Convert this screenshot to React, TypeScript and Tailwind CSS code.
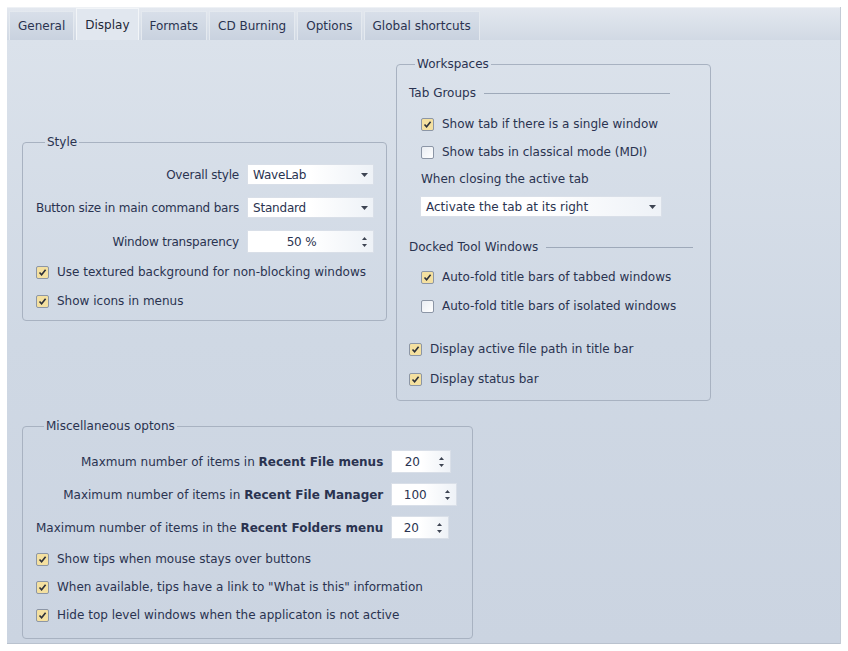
import React from 'react';

const tabs = ['General', 'Display', 'Formats', 'CD Burning', 'Options', 'Global shortcuts'];

function Check({ checked, label }: { checked: boolean; label: React.ReactNode }) {
  return (
    <div className="flex items-center gap-[8px] h-[18px]">
      <span
        className={`w-[13px] h-[13px] border border-[#8c96a6] rounded-[2px] flex items-center justify-center shrink-0 ${
          checked ? 'bg-[#f4e0a0]' : 'bg-gradient-to-br from-[#e9edf3] to-[#ffffff]'
        }`}
      >
        {checked && (
          <svg width="9" height="9" viewBox="0 0 9 9">
            <path d="M1.5 4.5 L3.6 6.8 L7.6 1.8" fill="none" stroke="#2b2f3a" strokeWidth="1.6" />
          </svg>
        )}
      </span>
      <span className="whitespace-nowrap">{label}</span>
    </div>
  );
}

function Select({ value, width }: { value: string; width: number }) {
  return (
    <div
      className="h-[21px] flex items-center bg-gradient-to-r from-white via-white to-[#eef2f7] border border-[#d9dfe8]"
      style={{ width }}
    >
      <span className="flex-1 pl-[5px] whitespace-nowrap">{value}</span>
      <span className="w-[18px] flex justify-center">
        <svg width="7" height="4" viewBox="0 0 7 4">
          <path d="M0 0 H7 L3.5 4 Z" fill="#3d4452" />
        </svg>
      </span>
    </div>
  );
}

function Spin({ value, width }: { value: string; width: number }) {
  return (
    <div
      className="h-[23px] flex items-center bg-gradient-to-r from-white via-white to-[#eef2f7] border border-[#d9dfe8]"
      style={{ width }}
    >
      <span className="flex-1 whitespace-nowrap text-center">{value}</span>
      <span className="w-[18px] flex flex-col items-center gap-[4px]">
        <svg width="5" height="3" viewBox="0 0 5 3">
          <path d="M0 3 H5 L2.5 0 Z" fill="#3d4452" />
        </svg>
        <svg width="5" height="3" viewBox="0 0 5 3">
          <path d="M0 0 H5 L2.5 3 Z" fill="#3d4452" />
        </svg>
      </span>
    </div>
  );
}

function SubHeading({ label, lineWidth }: { label: string; lineWidth: number }) {
  return (
    <div className="flex items-center gap-[8px]">
      <span className="whitespace-nowrap">{label}</span>
      <span className="h-0 border-t border-[#9ea9b9]" style={{ width: lineWidth }} />
    </div>
  );
}

export default function App() {
  return (
    <div
      className="w-[848px] h-[651px] bg-white pt-[7px] pl-[7px] text-[12px] text-[#2a3350]"
      style={{ fontFamily: '"DejaVu Sans", "Liberation Sans", sans-serif' }}
    >
      <div className="w-[834px] h-[637px] flex flex-col border-r border-[#c3cbd6]">
        {/* tab strip */}
        <div className="h-[33px] bg-gradient-to-b from-[#e3e8ef] to-[#d1d9e4] flex items-end pl-[2px] gap-[2px] border-t border-[#eef1f5]">
          {tabs.map((t) => {
            const active = t === 'Display';
            return (
              <div
                key={t}
                className={`px-[8px] flex items-center whitespace-nowrap border border-b-0 ${
                  active
                    ? 'h-[32px] bg-[#e1e7ef] border-[#f2f5f8] text-[#1f2838]'
                    : 'h-[29px] bg-gradient-to-b from-[#d8dfe9] to-[#c9d2df] border-[#e4e9ef] text-[#2a3350]'
                }`}
              >
                {t}
              </div>
            );
          })}
        </div>

        {/* page */}
        <div className="flex-1 bg-gradient-to-b from-[#dbe2eb] via-[#cfd8e4] to-[#cbd4e1] border-b border-[#b9c2ce] pl-[15px]">
          <div className="flex items-start">
            {/* Style group */}
            <fieldset className="mt-[93px] w-[365px] min-w-0 h-[188px] border border-[#a8b2c1] rounded-[4px] pl-[13px] pr-[12px]">
              <legend className="px-[2px] ml-[9px]">Style</legend>
              <div className="grid grid-cols-[auto_auto] gap-x-[8px] gap-y-[12px] items-center justify-end mt-[13px] tracking-[-0.2px]">
                <span className="text-right whitespace-nowrap">Overall style</span>
                <Select value="WaveLab" width={127} />
                <span className="text-right whitespace-nowrap">Button size in main command bars</span>
                <Select value="Standard" width={127} />
                <span className="text-right whitespace-nowrap">Window transparency</span>
                <Spin value="50 %" width={127} />
              </div>
              <div className="flex flex-col gap-[11px] mt-[10px]">
                <Check checked label="Use textured background for non-blocking windows" />
                <Check checked label="Show icons in menus" />
              </div>
            </fieldset>

            {/* Workspaces group */}
            <fieldset className="ml-[9px] mt-[15px] w-[315px] min-w-0 h-[346px] border border-[#a8b2c1] rounded-[4px] pl-[12px]">
              <legend className="px-[2px] ml-[6px]">Workspaces</legend>
              <div className="mt-[11px]">
                <SubHeading label="Tab Groups" lineWidth={186} />
              </div>
              <div className="pl-[12px] flex flex-col gap-[10px] mt-[13px]">
                <Check checked label="Show tab if there is a single window" />
                <Check checked={false} label="Show tabs in classical mode (MDI)" />
              </div>
              <div className="pl-[12px] mt-[9px]">When closing the active tab</div>
              <div className="pl-[11px] mt-[8px]">
                <Select value="Activate the tab at its right" width={242} />
              </div>
              <div className="mt-[21px]">
                <SubHeading label="Docked Tool Windows" lineWidth={147} />
              </div>
              <div className="pl-[12px] flex flex-col gap-[11px] mt-[12px]">
                <Check checked label="Auto-fold title bars of tabbed windows" />
                <Check checked={false} label="Auto-fold title bars of isolated windows" />
              </div>
              <div className="flex flex-col gap-[12px] mt-[25px]">
                <Check checked label="Display active file path in title bar" />
                <Check checked label="Display status bar" />
              </div>
            </fieldset>
          </div>

          {/* Miscellaneous group */}
          <fieldset className="mt-[16px] w-[451px] min-w-0 h-[222px] border border-[#a8b2c1] rounded-[4px] pl-[13px]">
            <legend className="px-[2px] ml-[8px]">Miscellaneous optons</legend>
            <div className="grid grid-cols-[auto_auto] w-fit gap-x-[8px] gap-y-[10px] items-center mt-[15px]">
              <span className="text-right whitespace-nowrap">
                Maxmum number of items in <b>Recent File menus</b>
              </span>
              <Spin value="20" width={60} />
              <span className="text-right whitespace-nowrap">
                Maximum number of items in <b>Recent File Manager</b>
              </span>
              <Spin value="100" width={66} />
              <span className="text-right whitespace-nowrap">
                Maximum number of items in the <b>Recent Folders menu</b>
              </span>
              <Spin value="20" width={58} />
            </div>
            <div className="flex flex-col gap-[10px] mt-[11px]">
              <Check checked label="Show tips when mouse stays over buttons" />
              <Check checked label={'When available, tips have a link to "What is this" information'} />
              <Check checked label="Hide top level windows when the applicaton is not active" />
            </div>
          </fieldset>
        </div>
      </div>
    </div>
  );
}
